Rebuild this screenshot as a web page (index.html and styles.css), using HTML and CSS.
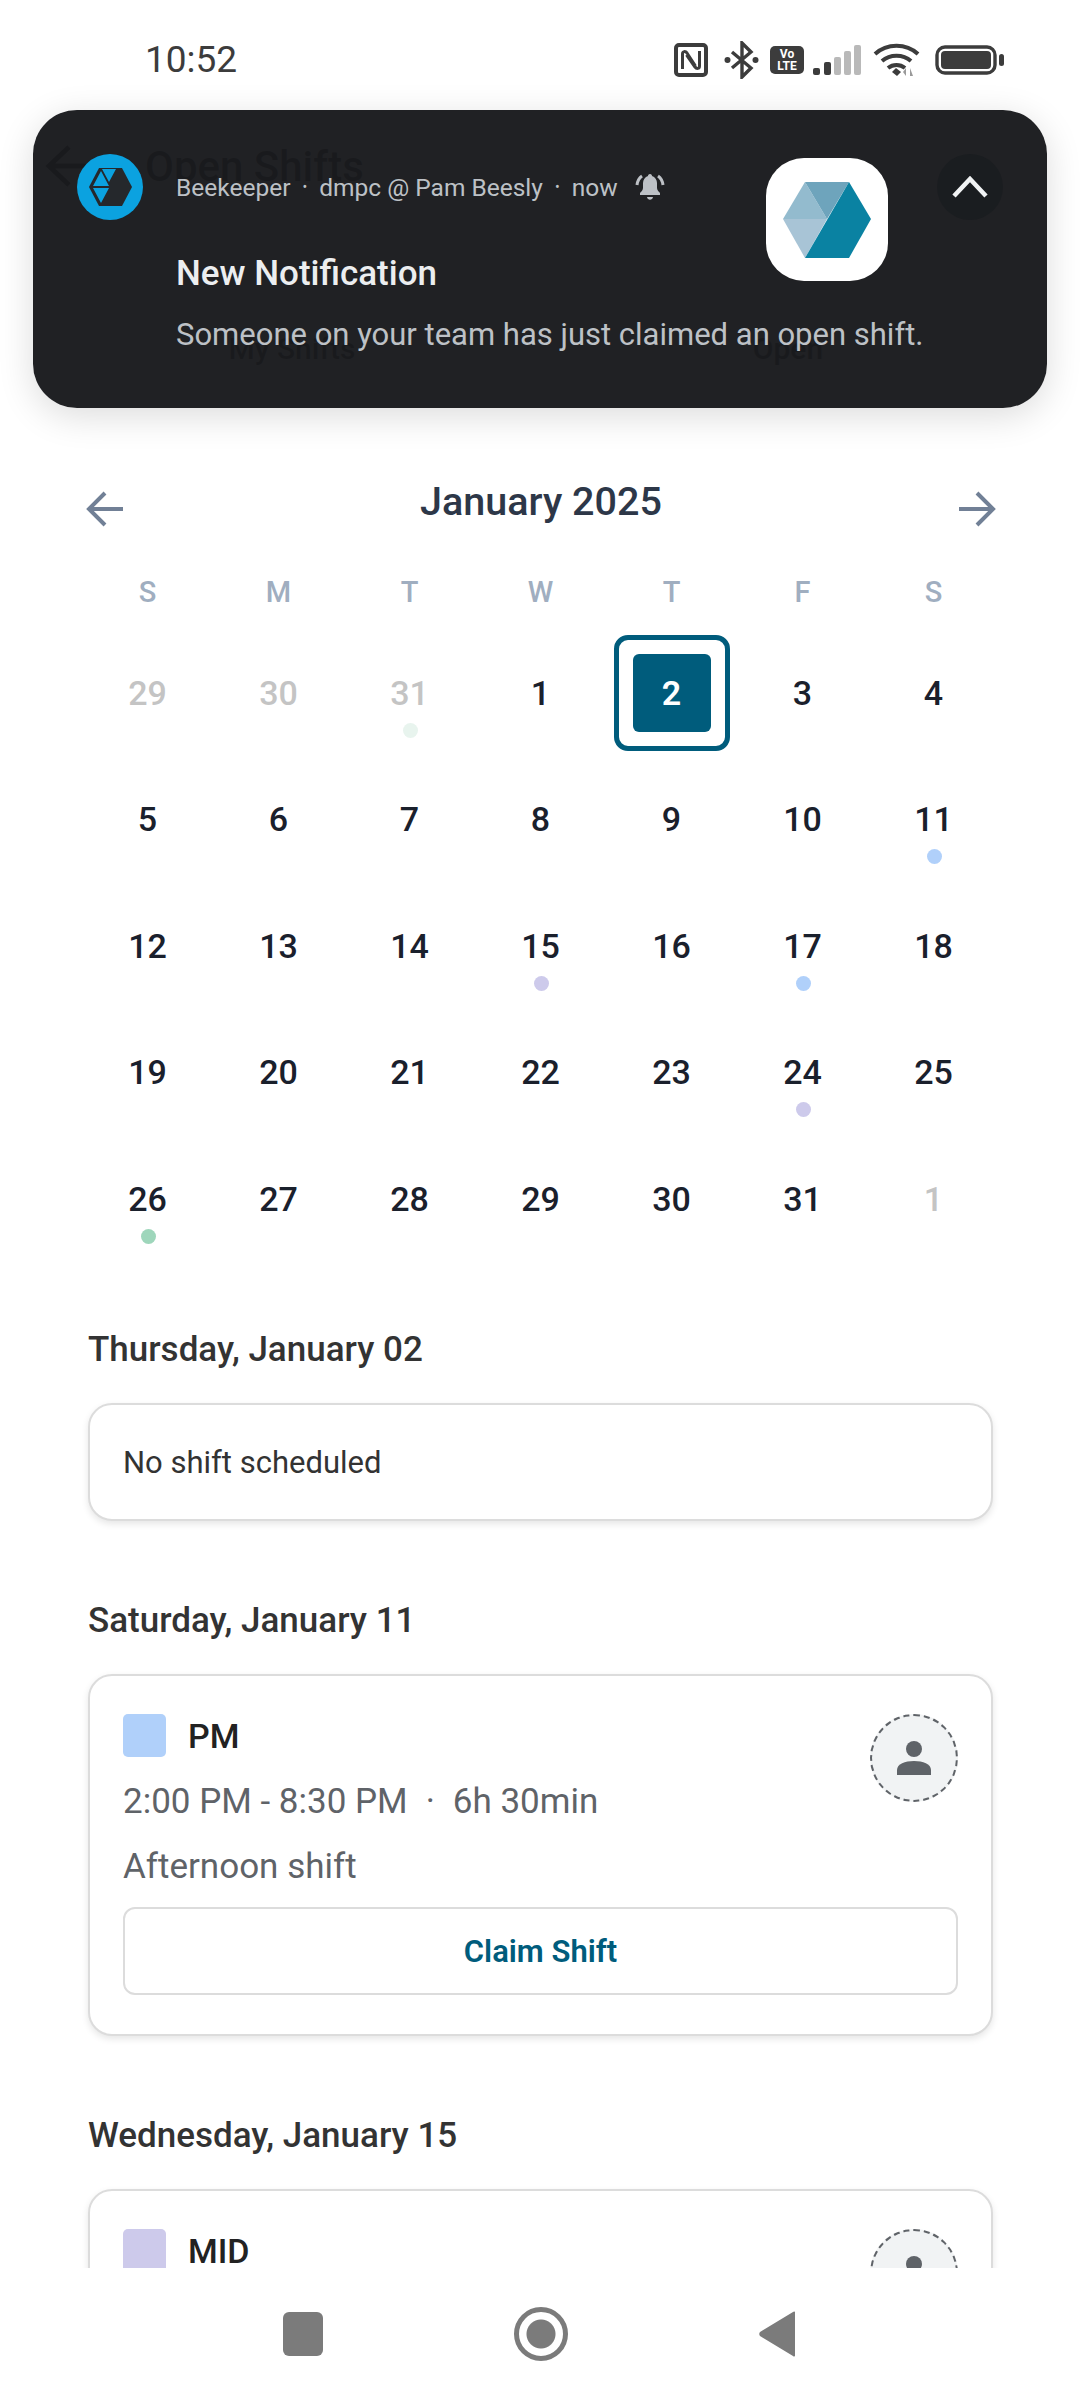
FILE: index.html
```html
<!DOCTYPE html>
<html lang="en">
<head>
    <meta charset="UTF-8">
    <meta name="viewport" content="width=device-width, initial-scale=1.0">
    <title>Open Shifts</title>
    <link rel="stylesheet" href="styles.css">
</head>
<body>
    <div class="statusbar">
        <div class="time">10:52</div>
        <div class="status-icons">
            <svg class="nfc" width="34" height="34" viewBox="0 0 34 34">
                <rect x="2" y="2" width="30" height="30" rx="3" fill="none" stroke="#3c3c3c" stroke-width="4"/>
                <path d="M8.500 26V11c0-3 3-3 4.500-1l8.500 13M25.500 8v15c0 3-3 3-4.500 1l-8.500-12" fill="none" stroke="#3c3c3c" stroke-width="3"/>
            </svg>
            <svg class="bt" width="35" height="38" viewBox="0 0 35 38">
                <path d="M8 11l19 16-9 9V2l9 9L8 27" fill="none" stroke="#3c3c3c" stroke-width="3.4"/>
                <circle cx="3.500" cy="19" r="3" fill="#3c3c3c"/>
                <circle cx="31.500" cy="19" r="3" fill="#3c3c3c"/>
            </svg>
            <div class="volte">Vo<br>LTE</div>
            <svg class="signal" width="48" height="30" viewBox="0 0 48 30">
                <rect x="0" y="23" width="7" height="7" rx="2" fill="#3c3c3c"/>
                <rect x="11" y="17" width="7" height="13" rx="2" fill="#3c3c3c"/>
                <rect x="21" y="12" width="7" height="18" rx="2" fill="#b9b9b9"/>
                <rect x="31" y="6" width="7" height="24" rx="2" fill="#b9b9b9"/>
                <rect x="41" y="0" width="7" height="30" rx="2" fill="#b9b9b9"/>
            </svg>
            <svg class="wifi" width="47" height="34" viewBox="0 0 47 34">
                <path d="M2 11c12-11 31-11 43 0M9 18c8-7 21-7 29 0M15 25c5-4 12-4 17 0" fill="none" stroke="#3c3c3c" stroke-width="4"/>
                <path d="M19 29l4-4 5 4-4 4z" fill="#3c3c3c"/>
                <path d="M33 33v-8l-3 4zM37 25v8h3z" fill="#9a9a9a"/>
            </svg>
            <svg class="battery" width="69" height="30" viewBox="0 0 69 30">
                <rect x="2" y="2" width="58" height="26" rx="8" fill="none" stroke="#3c3c3c" stroke-width="3.4"/>
                <rect x="6" y="6" width="50" height="18" rx="4" fill="#3c3c3c"/>
                <rect x="64" y="9" width="5" height="12" rx="2.500" fill="#3c3c3c"/>
            </svg>
        </div>
    </div>

    <!-- app header, mostly covered by the notification -->
    <div class="appbar">
        <svg width="50" height="44" viewBox="0 0 50 44"><path d="M48 22H4M24 3L4 22l20 19" fill="none" stroke="#333" stroke-width="5"/></svg>
        <div class="appbar-title">Open Shifts</div>
    </div>
    <div class="tabs">
        <div class="tab">My Shifts</div>
        <div class="tab active">Open</div>
    </div>

    <div class="notification">
        <svg class="app-badge" width="66" height="66" viewBox="0 0 66 66">
            <circle cx="33" cy="33" r="33" fill="#0ba2e0"/>
            <path d="M12 33l10-19h23l10 19-10 19H22z" fill="#25282c"/>
            <path d="M16 32l8-15 8 15zM25 15h14l-7 13zM16 34h16l-8 15z" fill="#0ba2e0"/>
        </svg>
        <div class="notif-body">
            <div class="notif-meta">
                <span>Beekeeper</span><span class="sep">•</span><span>dmpc @ Pam Beesly</span><span class="sep">•</span><span>now</span>
                <svg class="bell" width="30" height="28" viewBox="0 0 30 28">
                    <path d="M15 1c-1.500 0-2 1-2 2-3 1-5 4-5 7v5c0 2-2 4-3 5v2h20v-2c-1-1-3-3-3-5v-5c0-3-2-6-5-7 0-1-.5-2-2-2zM12 24h6c-.5 3.500-5.500 3.500-6 0z" fill="#bdc1c6"/>
                    <path d="M7 3C4 5 2.500 8 2 12M23 3c3 2 4.500 5 5 9" fill="none" stroke="#bdc1c6" stroke-width="3"/>
                </svg>
            </div>
            <div class="notif-title">New Notification</div>
            <div class="notif-text">Someone on your team has just claimed an open shift.</div>
        </div>
        <div class="notif-thumb">
            <svg width="88" height="76" viewBox="0 0 88 76">
                <path d="M22 0L0 37h44z" fill="#93bbce"/>
                <path d="M22 0h44L44 37z" fill="#6ea4bc"/>
                <path d="M0 37h44L22 76z" fill="#a8c4d6"/>
                <path d="M66 0l22 37-22 39H22z" fill="#0a82a2"/>
            </svg>
        </div>
        <div class="notif-expand">
            <svg width="36" height="22" viewBox="0 0 36 22"><path d="M2 20L18 3l16 17" fill="none" stroke="#f1f3f4" stroke-width="4.500"/></svg>
        </div>
    </div>

    <div class="content">
        <div class="calendar">
            <div class="cal-nav">
                <svg class="cal-arrow" width="38" height="36" viewBox="0 0 38 36"><path d="M37 18H3M19 2L3 18l16 16" fill="none" stroke="#718096" stroke-width="4"/></svg>
                <div class="cal-title">January 2025</div>
                <svg class="cal-arrow" width="38" height="36" viewBox="0 0 38 36"><path d="M1 18h34M19 2l16 16-16 16" fill="none" stroke="#718096" stroke-width="4"/></svg>
            </div>
            <div class="cal-grid">
                <div class="weekday">S</div>
                <div class="weekday">M</div>
                <div class="weekday">T</div>
                <div class="weekday">W</div>
                <div class="weekday">T</div>
                <div class="weekday">F</div>
                <div class="weekday">S</div>

                <div class="day muted">29</div>
                <div class="day muted">30</div>
                <div class="day muted">31<span class="dot green faint"></span></div>
                <div class="day">1</div>
                <div class="day selected"><span class="selected-box">2</span></div>
                <div class="day">3</div>
                <div class="day">4</div>

                <div class="day">5</div>
                <div class="day">6</div>
                <div class="day">7</div>
                <div class="day">8</div>
                <div class="day">9</div>
                <div class="day">10</div>
                <div class="day">11<span class="dot blue"></span></div>

                <div class="day">12</div>
                <div class="day">13</div>
                <div class="day">14</div>
                <div class="day">15<span class="dot purple"></span></div>
                <div class="day">16</div>
                <div class="day">17<span class="dot blue"></span></div>
                <div class="day">18</div>

                <div class="day">19</div>
                <div class="day">20</div>
                <div class="day">21</div>
                <div class="day">22</div>
                <div class="day">23</div>
                <div class="day">24<span class="dot purple"></span></div>
                <div class="day">25</div>

                <div class="day">26<span class="dot green"></span></div>
                <div class="day">27</div>
                <div class="day">28</div>
                <div class="day">29</div>
                <div class="day">30</div>
                <div class="day">31</div>
                <div class="day muted">1</div>
            </div>
        </div>

        <div class="date-heading first">Thursday, January 02</div>
        <div class="card empty">No shift scheduled</div>

        <div class="date-heading">Saturday, January 11</div>
        <div class="card shift">
            <div class="shift-top">
                <div class="shift-info">
                    <div class="shift-name"><span class="swatch pm"></span>PM</div>
                    <div class="shift-time">2:00 PM - 8:30 PM<span class="middot">·</span>6h 30min</div>
                    <div class="shift-desc">Afternoon shift</div>
                </div>
                <div class="avatar">
                    <svg width="34" height="34" viewBox="0 0 34 34"><circle cx="17" cy="8" r="8" fill="#5f6368"/><path d="M0 34v-5c0-6 8-9 17-9s17 3 17 9v5z" fill="#5f6368"/></svg>
                </div>
            </div>
            <div class="claim">Claim Shift</div>
        </div>

        <div class="date-heading">Wednesday, January 15</div>
        <div class="card shift">
            <div class="shift-top">
                <div class="shift-info">
                    <div class="shift-name"><span class="swatch mid"></span>MID</div>
                </div>
                <div class="avatar">
                    <svg width="34" height="34" viewBox="0 0 34 34"><circle cx="17" cy="8" r="8" fill="#5f6368"/><path d="M0 34v-5c0-6 8-9 17-9s17 3 17 9v5z" fill="#5f6368"/></svg>
                </div>
            </div>
        </div>
    </div>

    <div class="navbar">
        <div class="nav-square"></div>
        <div class="nav-circle"></div>
        <svg width="38" height="46" viewBox="0 0 38 46"><path d="M36 1.500v43c0 1-1 1.500-2 .5L1 25c-1-1-1-3 0-4L34 1c1-1 2-.5 2 .5z" fill="#7b7b7b"/></svg>
    </div>
</body>
</html>
```

FILE: styles.css
```css
* {
    box-sizing: border-box;
}
body {
    margin: 0;
    width: 1080px;
    height: 2400px;
    overflow: hidden;
    position: relative;
    display: flex;
    flex-direction: column;
    background: #fff;
    font-family: Roboto, "Noto Sans", sans-serif;
    color: #1a202c;
}

/* status bar */
.statusbar {
    height: 110px;
    flex: none;
    display: flex;
    justify-content: space-between;
    align-items: flex-start;
    padding: 40px 76px 0 145px;
}
.time {
    font-size: 37px;
    line-height: 40px;
    color: #3c3c3c;
}
.status-icons {
    display: flex;
    align-items: center;
    height: 40px;
}
.status-icons .bt { margin-left: 16px; }
.volte {
    width: 34px;
    height: 28px;
    margin-left: 11px;
    background: #3c3c3c;
    border-radius: 5px;
    color: #fff;
    font-size: 12px;
    font-weight: 700;
    line-height: 12px;
    text-align: center;
    padding-top: 2px;
}
.status-icons .signal { margin-left: 9px; }
.status-icons .wifi { margin-left: 12px; }
.status-icons .battery { margin-left: 15px; }

/* app header behind the notification */
.appbar {
    height: 112px;
    flex: none;
    display: flex;
    align-items: center;
    gap: 50px;
    padding-left: 45px;
    color: #333;
}
.appbar-title {
    font-size: 42px;
    font-weight: 500;
}
.tabs {
    height: 88px;
    flex: none;
    margin: 82px 44px 0;
    display: flex;
    color: #333;
    font-size: 30px;
    font-weight: 500;
}
.tab {
    flex: 1;
    display: flex;
    align-items: center;
    justify-content: center;
    border-radius: 16px;
}
.tab.active {
    background: #e6e6e6;
}

/* notification */
.notification {
    position: absolute;
    left: 33px;
    top: 110px;
    width: 1014px;
    height: 298px;
    border-radius: 44px;
    background: rgba(25, 26, 29, 0.97);
    box-shadow: 0 8px 36px rgba(0, 0, 0, 0.14);
    color: #bdc1c6;
}
.app-badge {
    position: absolute;
    left: 44px;
    top: 44px;
}
.notif-body {
    position: absolute;
    left: 143px;
    top: 59px;
}
.notif-meta {
    display: flex;
    align-items: center;
    height: 36px;
    font-size: 24.500px;
}
.sep {
    margin: 0 12px;
    font-size: 14px;
}
.bell {
    margin-left: 17px;
}
.notif-title {
    margin-top: 49px;
    font-size: 35px;
    font-weight: 500;
    line-height: 40px;
    color: #eceef0;
}
.notif-text {
    margin-top: 21px;
    font-size: 31px;
    line-height: 40px;
}
.notif-thumb {
    position: absolute;
    left: 733px;
    top: 48px;
    width: 122px;
    height: 123px;
    border-radius: 38px;
    background: #fff;
    display: flex;
    align-items: center;
    justify-content: center;
}
.notif-expand {
    position: absolute;
    left: 904px;
    top: 44px;
    width: 66px;
    height: 66px;
    border-radius: 50%;
    background: #1a1d20;
    display: flex;
    align-items: center;
    justify-content: center;
}

/* scrolling area */
.content {
    flex: 1;
    min-height: 0;
    overflow: hidden;
    padding: 78px 87px 0 88px;
}
.calendar {
    margin: 0 -6px;
}
.cal-nav {
    display: flex;
    justify-content: space-between;
    align-items: center;
    padding: 0 3px 0 4px;
    height: 62px;
}
.cal-arrow {
    margin-top: 16px;
}
.cal-title {
    font-size: 39.500px;
    font-weight: 500;
    color: #2d3748;
}
.cal-grid {
    display: grid;
    grid-template-columns: repeat(7, 1fr);
    grid-template-rows: 74.500px;
    grid-auto-rows: 126.500px;
    margin-top: 23px;
}
.weekday {
    display: flex;
    align-items: center;
    justify-content: center;
    font-size: 29px;
    font-weight: 500;
    color: #a0aec0;
}
.day {
    position: relative;
    display: flex;
    align-items: center;
    justify-content: center;
    font-size: 34px;
    font-weight: 500;
}
.day.muted {
    color: #c4c4c4;
}
.dot {
    position: absolute;
    left: 50%;
    top: calc(50% + 30px);
    width: 15px;
    height: 15px;
    margin-left: -7px;
    border-radius: 50%;
}
.dot.blue { background: #b0d0fa; }
.dot.purple { background: #cdcaeb; }
.dot.green { background: #9ed6bb; }
.dot.faint { background: #e8f4ee; }
.selected {
    width: 116px;
    height: 116px;
    justify-self: center;
    align-self: center;
    border: 5px solid #005c7c;
    border-radius: 14px;
}
.selected-box {
    width: 78px;
    height: 78px;
    display: flex;
    align-items: center;
    justify-content: center;
    background: #005c7c;
    border-radius: 6px;
    color: #fff;
    font-weight: 600;
}

.date-heading {
    margin-top: 80px;
    font-size: 35px;
    font-weight: 500;
    line-height: 40px;
    color: #333;
}
.date-heading.first {
    margin-top: 68px;
}
.card {
    margin-top: 33px;
    border: 2px solid #dcdcdc;
    border-radius: 24px;
    background: #fff;
    box-shadow: 0 3px 7px rgba(0, 0, 0, 0.1);
    padding: 0 33px;
}
.card.empty {
    height: 118px;
    display: flex;
    align-items: center;
    font-size: 31px;
    color: #333;
}
.card.shift {
    padding-top: 38px;
    padding-bottom: 39px;
}
.shift-top {
    display: flex;
    justify-content: space-between;
}
.shift-name {
    display: flex;
    align-items: center;
    gap: 22px;
    height: 43px;
    font-size: 34px;
    font-weight: 500;
    line-height: 1;
    color: #222;
}
.swatch {
    width: 43px;
    height: 43px;
    border-radius: 5px;
}
.swatch.pm { background: #b0d0fa; }
.swatch.mid { background: #cdcaeb; }
.shift-time,
.shift-desc {
    font-size: 35px;
    line-height: 40px;
    color: #5f6368;
}
.shift-time {
    margin-top: 25px;
}
.shift-desc {
    margin-top: 25px;
}
.middot {
    margin: 0 18px;
}
.avatar {
    width: 88px;
    height: 88px;
    flex: none;
    border: 2px dashed #5f6368;
    border-radius: 50%;
    background: #f1f3f4;
    display: flex;
    align-items: center;
    justify-content: center;
}
.claim {
    height: 88px;
    margin-top: 20px;
    border: 2px solid #dcdcdc;
    border-radius: 12px;
    display: flex;
    align-items: center;
    justify-content: center;
    font-size: 31px;
    font-weight: 600;
    color: #005c7c;
}

/* android nav bar */
.navbar {
    height: 132px;
    flex: none;
    background: #fff;
    display: flex;
    align-items: center;
    justify-content: center;
    gap: 191px;
}
.nav-square {
    width: 40px;
    height: 44px;
    border-radius: 6px;
    background: #7b7b7b;
}
.nav-circle {
    width: 54px;
    height: 54px;
    border-radius: 50%;
    border: 5px solid #7b7b7b;
    background: radial-gradient(circle, #7b7b7b 14px, #fff 15px);
}
```
